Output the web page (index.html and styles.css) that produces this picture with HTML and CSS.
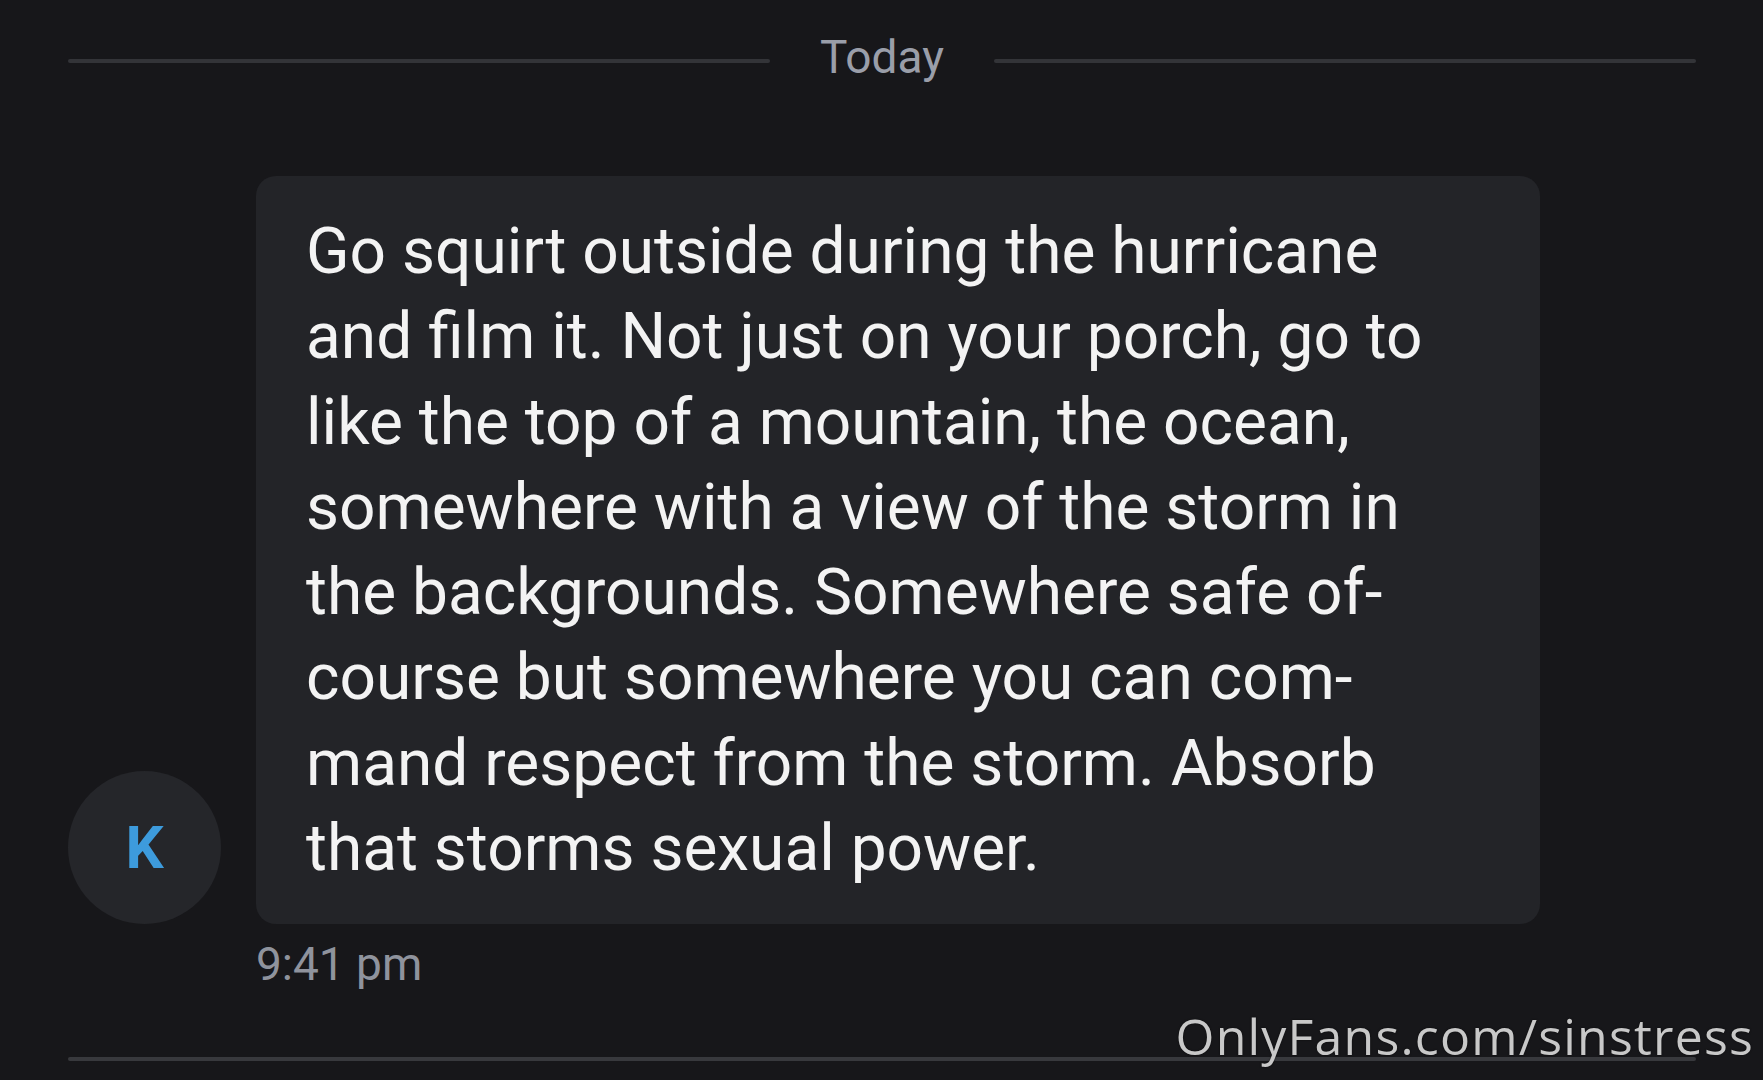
FILE: index.html
```html
<!DOCTYPE html>
<html lang="en">
<head>
<meta charset="utf-8">
<title>Chat</title>
<link rel="stylesheet" href="styles.css">
</head>
<body>
<div class="page">
  <div class="divider">
    <span class="rule"></span>
    <span class="day">Today</span>
    <span class="rule"></span>
  </div>
  <div class="message">
    <div class="avatar">K</div>
    <div class="bubble">Go squirt outside during the hurricane<br>and film it. Not just on your porch, go to<br>like the top of a mountain, the ocean,<br>somewhere with a view of the storm in<br>the backgrounds. Somewhere safe of-<br>course but somewhere you can com-<br>mand respect from the storm. Absorb<br>that storms sexual power.</div>
  </div>
  <div class="time">9:41 pm</div>
  <div class="bottom-rule"></div>
</div>
<div class="watermark">OnlyFans.com/sinstress</div>
</body>
</html>
```
FILE: styles.css
```css
html, body {
  margin: 0;
  padding: 0;
  background: #17171a;
}
body {
  width: 1763px;
  height: 1080px;
  overflow: hidden;
  position: relative;
  font-family: Roboto, "Noto Sans", sans-serif;
}
.page {
  display: flex;
  flex-direction: column;
  padding: 30px 67px 0 68px;
}
.divider {
  display: flex;
  align-items: center;
  gap: 50px;
  height: 54px;
}
.rule {
  flex: 1;
  height: 4px;
  margin-top: 7px;
  background: #333438;
  border-radius: 2px;
}
.day {
  font-size: 46px;
  line-height: 54px;
  color: #9a9ea9;
}
.message {
  display: flex;
  align-items: flex-end;
  gap: 35px;
  margin-top: 92px;
}
.avatar {
  width: 153px;
  height: 153px;
  flex: none;
  border-radius: 50%;
  background: #25262a;
  color: #3d9bdc;
  font-weight: 700;
  font-size: 60px;
  display: flex;
  align-items: center;
  justify-content: center;
}
.bubble {
  width: 1284px;
  box-sizing: border-box;
  padding: 33px 40px 33px 50px;
  background: #232428;
  border-radius: 20px;
  color: #f3f3f3;
  font-size: 64px;
  line-height: 85.3px;
}
.time {
  margin: 13px 0 0 188px;
  font-size: 46px;
  line-height: 54px;
  color: #8f939d;
}
.bottom-rule {
  margin-top: 66px;
  height: 4px;
  background: #38393d;
  border-radius: 2px;
}
.watermark {
  position: absolute;
  top: 1011px;
  right: 9px;
  font-family: "Open Sans", "Noto Sans", sans-serif;
  font-size: 50px;
  line-height: 50px;
  letter-spacing: 1.2px;
  color: #c8c8c8;
  text-shadow: 0 0 2px rgba(0, 0, 0, 0.6);
}
```
